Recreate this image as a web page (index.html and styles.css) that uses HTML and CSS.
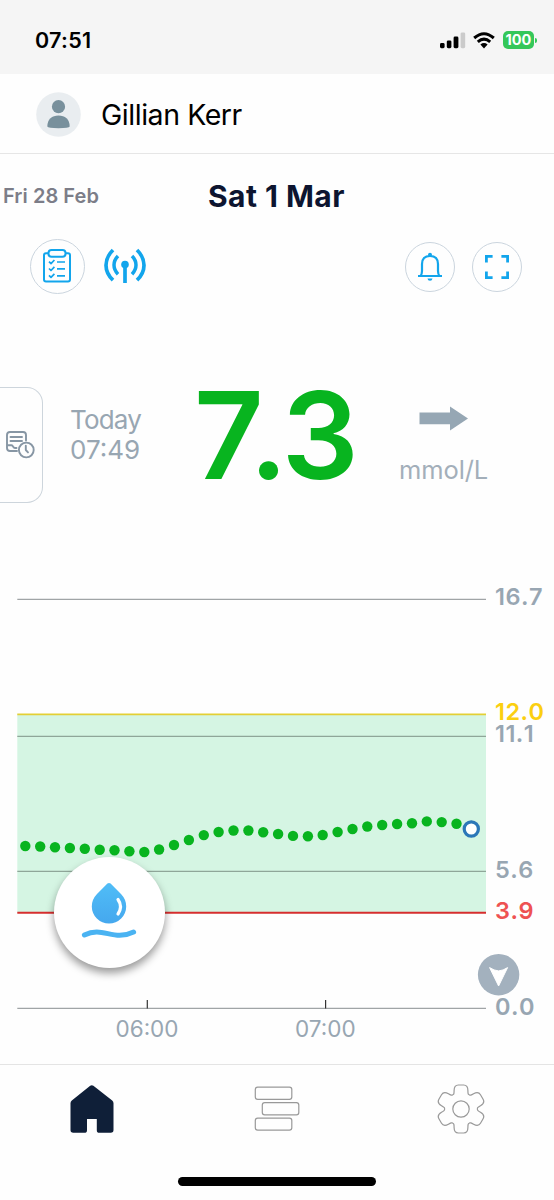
FILE: index.html
```
<!DOCTYPE html>
<html lang="en">
<head>
  <meta charset="UTF-8">
  <title>Glucose</title>
  <link rel="stylesheet" href="styles.css">
</head>
<body>

  <!-- Status bar -->
  <div class="statusbar">
    <span class="clock">07:51</span>
    <div class="status-icons">
      <svg width="26" height="17" viewBox="0 0 26 17">
        <rect x="0" y="11" width="4.6" height="5.2" rx="1.4"/>
        <rect x="6.8" y="8.4" width="4.6" height="7.8" rx="1.4"/>
        <rect x="13.6" y="4.6" width="4.8" height="11.6" rx="1.4"/>
        <rect x="20.6" y="0.4" width="4.6" height="15.8" rx="1.4" fill="#cbcbcb"/>
      </svg>
      <svg class="wifi" width="22" height="17" viewBox="0 0 22 17">
        <path d="M1.2 6 Q11 -2.6 20.8 6 M4.8 9.8 Q11 4.4 17.2 9.8" fill="none" stroke="#000" stroke-width="3"/>
        <path d="M7.4 12.4 Q11 9.8 14.6 12.4 L11 16.4 Z"/>
      </svg>
      <span class="battery">100</span>
      <span class="battery-tip"></span>
    </div>
  </div>

  <!-- Patient -->
  <div class="patient">
    <svg width="45" height="45" viewBox="0 0 45 45">
      <circle cx="22.5" cy="22.5" r="22.3" fill="#e9edf0"/>
      <circle cx="22.5" cy="14.7" r="6.6" fill="#78909c"/>
      <path d="M11.3 34.5 C11.3 27 16 23.4 22.5 23.4 S33.7 27 33.7 34.5 Q33 36.2 22.5 36.2 Q12 36.2 11.3 34.5 Z" fill="#78909c"/>
    </svg>
    <span class="patient-name">Gillian Kerr</span>
  </div>

  <!-- Dates -->
  <div class="dates">
    <span class="date-prev">Fri 28 Feb</span>
    <span class="date-current">Sat 1 Mar</span>
  </div>

  <!-- Actions -->
  <div class="actions">
    <div class="round round-big">
      <svg width="28" height="34" viewBox="0 0 28 34" fill="none" stroke="#12a5ec" stroke-width="2" stroke-linejoin="round">
        <path d="M5.5 4.2 H3 Q1 4.2 1 6.2 V30.6 Q1 32.6 3 32.6 H25 Q27 32.6 27 30.6 V6.2 Q27 4.2 25 4.2 H22.5"/>
        <rect x="5.5" y="1" width="17" height="6.8" rx="3"/>
        <path d="M6 12.6 l2 2 3.4-3.6 M6 19.5 l2 2 3.4-3.6 M6 26.4 l2 2 3.4-3.6 M14 13 h8 M14 19.9 h8 M14 26.8 h8" stroke-width="1.7"/>
      </svg>
    </div>
    <svg class="antenna" width="42" height="36" viewBox="0 0 42 36" fill="none" stroke="#12a5ec" stroke-width="3.7">
      <path d="M9 2 Q2 9 2 17.2 T9 32.2 M33 2 Q40 9 40 17.2 T33 32.2"/>
      <path d="M14 8 Q10 12 10 17 T14 26.2 M28 8 Q32 12 32 17 T28 26.2" stroke-width="3.5"/>
      <path d="M21 17 V35"/>
      <circle cx="21" cy="16.6" r="3.8" fill="#12a5ec" stroke="none"/>
    </svg>
    <div class="round bell">
      <svg width="26" height="30" viewBox="0 0 26 30" fill="none" stroke="#12a5ec" stroke-width="2.2">
        <path d="M1 24 H25 M3.4 24 Q5 22.5 5 19 V12 Q5 4 13 4 T21 12 V19 Q21 22.5 22.6 24"/>
        <circle cx="13" cy="2.8" r="2" fill="#12a5ec" stroke="none"/>
        <path d="M10.5 26.4 H15.5 Q15.2 28.8 13 28.8 T10.5 26.4 Z" fill="#12a5ec" stroke="none"/>
      </svg>
    </div>
    <div class="round">
      <svg width="24" height="24" viewBox="0 0 24 24" fill="none" stroke="#12a5ec" stroke-width="2.8">
        <path d="M1.4 7.6 V1.4 H7.6 M16.4 1.4 H22.6 V7.6 M22.6 16.4 V22.6 H16.4 M7.6 22.6 H1.4 V16.4"/>
      </svg>
    </div>
  </div>

  <!-- Current reading -->
  <div class="reading">
    <div class="drawer">
      <svg width="29" height="28" viewBox="0 0 29 28" fill="none" stroke="#8796a4" stroke-width="1.9" stroke-linecap="round" stroke-linejoin="round">
        <path d="M11 20 H4 Q1 20 1 17 V4 Q1 1 4 1 H17 Q20 1 20 4 V9.5 M4.5 6 H16 M4.5 10 H16 M1 14.2 H5.5 Q6.5 14.2 7 15.5 T9 17 H10.5"/>
        <circle cx="20.3" cy="19" r="7.4"/>
        <path d="M19.8 14.8 V19 L22 21.4"/>
      </svg>
    </div>
    <div class="when">
      <span class="day">Today</span>
      <span class="time">07:49</span>
    </div>
    <div class="value"><span class="whole">7</span>.3</div>
    <div class="trend">
      <svg width="50" height="25" viewBox="0 0 50 25">
        <path d="M0.5 6.5 H31 V0.5 L49 12.5 L31 24.5 V18.3 H0.5 Z" fill="#96a7b4"/>
      </svg>
      <span class="unit">mmol/L</span>
    </div>
  </div>

  <!-- Graph, x 0-554, y from 560 -->
  <div class="graph">
    <svg width="554" height="504" viewBox="0 560 554 504">
      <rect x="17.3" y="714" width="468.7" height="199" fill="#d5f5e3"/>
      <g stroke="#a0a4a6" stroke-width="1.2">
        <path d="M17.3 599.3 H486"/>
        <path d="M17.3 736.3 H486 M17.3 871.3 H486" stroke="#8fa699"/>
        <path d="M17.3 1008.4 H486"/>
        <path d="M147.3 1000 V1008.4 M325.6 1000 V1008.4" stroke="#333"/>
      </g>
      <path d="M17.3 714.3 H486" stroke="#e3cf35" stroke-width="1.8"/>
      <path d="M17.3 912.8 H486" stroke="#d62e2e" stroke-width="2"/>

      <g fill="#08b41f">
        <circle cx="25.3" cy="846" r="5.2"/>
        <circle cx="40.2" cy="846.5" r="5.2"/>
        <circle cx="55" cy="847.2" r="5.2"/>
        <circle cx="69.9" cy="848" r="5.2"/>
        <circle cx="84.8" cy="848.8" r="5.2"/>
        <circle cx="99.7" cy="849.7" r="5.2"/>
        <circle cx="114.5" cy="850.3" r="5.2"/>
        <circle cx="129.4" cy="851.3" r="5.2"/>
        <circle cx="144.3" cy="852" r="5.2"/>
        <circle cx="159.1" cy="849.5" r="5.2"/>
        <circle cx="174" cy="845" r="5.2"/>
        <circle cx="188.9" cy="840" r="5.2"/>
        <circle cx="203.8" cy="835.1" r="5.2"/>
        <circle cx="218.6" cy="832" r="5.2"/>
        <circle cx="233.5" cy="830.5" r="5.2"/>
        <circle cx="248.4" cy="830.5" r="5.2"/>
        <circle cx="263.2" cy="832.2" r="5.2"/>
        <circle cx="278.1" cy="834" r="5.2"/>
        <circle cx="293" cy="835.9" r="5.2"/>
        <circle cx="307.9" cy="836.3" r="5.2"/>
        <circle cx="322.7" cy="835" r="5.2"/>
        <circle cx="337.6" cy="832" r="5.2"/>
        <circle cx="352.5" cy="829" r="5.2"/>
        <circle cx="367.3" cy="826.5" r="5.2"/>
        <circle cx="382.2" cy="825" r="5.2"/>
        <circle cx="397.1" cy="824" r="5.2"/>
        <circle cx="412" cy="823.2" r="5.2"/>
        <circle cx="426.8" cy="821.4" r="5.2"/>
        <circle cx="441.7" cy="822.1" r="5.2"/>
        <circle cx="456.5" cy="823.8" r="5.2"/>
      </g>
      <circle cx="471.3" cy="829" r="7.1" fill="#fff" stroke="#2b77b8" stroke-width="3.2"/>

      <circle cx="498.6" cy="974.7" r="20.7" fill="#a3b1be"/>
      <path d="M489.6 967.6 Q494 970.6 498.6 970.9 Q503.2 970.6 507.6 967.6 L498.6 986 Z" fill="#fff" stroke="#fff" stroke-width="1" stroke-linejoin="round"/>

      <g class="level">
        <text x="495" y="604.9">16.7</text>
        <text x="495" y="720.3" class="high">12.0</text>
        <text x="495" y="742.3">11.1</text>
        <text x="495" y="877.5">5.6</text>
        <text x="495" y="918.8" class="low">3.9</text>
        <text x="495" y="1014.6">0.0</text>
      </g>
      <g class="hour">
        <text x="147" y="1037.3">06:00</text>
        <text x="325.4" y="1037.3">07:00</text>
      </g>
    </svg>
    <div class="drop-btn">
      <svg width="56" height="58" viewBox="0 0 56 58">
        <defs>
          <linearGradient id="water" x1="0" y1="0" x2="0" y2="1">
            <stop offset="0" stop-color="#50bdf7"/>
            <stop offset="1" stop-color="#45a8ee"/>
          </linearGradient>
        </defs>
        <path d="M26.4 1.6 Q28 0.2 29.6 1.6 L40 12 Q45.2 17.4 45.2 24.4 A17.2 17.2 0 0 1 10.8 24.4 Q10.8 17.4 16 12 Z" fill="url(#water)"/>
        <path d="M37 17.5 Q42 24.5 37 32" fill="none" stroke="#fff" stroke-width="3.2" stroke-linecap="round"/>
        <path d="M3.4 53 C22 43.5 32 60 52.6 50" fill="none" stroke="#4ab3f2" stroke-width="5" stroke-linecap="round"/>
      </svg>
    </div>
  </div>

  <!-- Bottom navigation -->
  <div class="nav">
    <svg width="44" height="48" viewBox="0 0 44 48">
      <path d="M20.2 0.8 Q21.8 -0.4 23.4 0.8 L42.2 15.4 Q43.5 16.5 43.5 18.2 V45 Q43.5 47.8 40.8 47.8 H29.4 Q26.8 47.8 26.8 45.2 V34 H17 V45.2 Q17 47.8 14.4 47.8 H3.2 Q0.5 47.8 0.5 45 V18.2 Q0.5 16.5 1.8 15.4 Z" fill="#0f1f38"/>
    </svg>
    <svg class="nav-list" width="46" height="46" viewBox="0 0 46 46" fill="none" stroke="#999" stroke-width="1.2">
      <rect x="1.3" y="1.2" width="36.5" height="12.1" rx="2.4"/>
      <rect x="8.3" y="16.7" width="36.5" height="12.1" rx="2.4"/>
      <rect x="1.3" y="32.1" width="36.5" height="12.1" rx="2.4"/>
    </svg>
    <svg width="50" height="50" viewBox="-25 -25 50 50" fill="none" stroke="#999" stroke-width="1.2">
      <defs>
        <path id="tooth" d="M-8.4 -14.5 C-7 -13.9 -6.9 -16.4 -6.9 -18.5 C-6.9 -22.4 -5.4 -24 -2.6 -24 H2.6 C5.4 -24 6.9 -22.4 6.9 -18.5 C6.9 -16.4 7 -13.9 8.4 -14.5"/>
      </defs>
      <circle cx="0" cy="0" r="8.2"/>
      <use href="#tooth"/>
      <use href="#tooth" transform="rotate(60)"/>
      <use href="#tooth" transform="rotate(120)"/>
      <use href="#tooth" transform="rotate(180)"/>
      <use href="#tooth" transform="rotate(240)"/>
      <use href="#tooth" transform="rotate(300)"/>
    </svg>
  </div>
  <div class="home-bar"></div>

</body>
</html>
```
FILE: styles.css
```
* {
  box-sizing: border-box;
}

body {
  margin: 0;
  width: 554px;
  height: 1200px;
  overflow: hidden;
  display: flex;
  flex-direction: column;
  background: #fefefe;
  font-family: Inter, "Liberation Sans", sans-serif;
  white-space: nowrap;
}

svg {
  display: block;
  flex: none;
}

/* Status bar */
.statusbar {
  height: 74px;
  padding: 6px 17px 0 35px;
  display: flex;
  align-items: center;
  justify-content: space-between;
  background: #f5f5f5;
}

.clock {
  font-size: 21.5px;
  font-weight: 600;
  letter-spacing: 0.3px;
}

.status-icons {
  display: flex;
  align-items: center;
}

.wifi {
  margin: 0 8px 0 7px;
}

.battery {
  width: 31px;
  height: 18px;
  border-radius: 5px;
  background: #34c759;
  color: #fff;
  font-size: 14.5px;
  font-weight: 700;
  line-height: 18px;
  text-align: center;
}

.battery-tip {
  width: 2px;
  height: 5px;
  margin-left: 1px;
  border-radius: 0 2px 2px 0;
  background: #34c759;
}

/* Patient */
.patient {
  height: 80px;
  padding: 2px 36px 0;
  display: flex;
  align-items: center;
  gap: 20px;
  border-bottom: 1.5px solid #e6e6e6;
}

.patient-name {
  font-size: 28.5px;
  letter-spacing: -0.45px;
}

/* Dates */
.dates {
  height: 84px;
  padding-left: 3px;
  display: flex;
  align-items: center;
}

.date-prev {
  width: 205px;
  color: #7c7d88;
  font-size: 20px;
  font-weight: 600;
  letter-spacing: 0.05px;
}

.date-current {
  color: #0d1530;
  font-size: 30px;
  font-weight: 700;
  letter-spacing: 0.45px;
}

/* Actions */
.actions {
  height: 56px;
  padding: 0 32px 0 30px;
  display: flex;
  align-items: center;
}

.round {
  width: 50px;
  height: 50px;
  margin-top: 1px;
  border: 1.5px solid #cbd5de;
  border-radius: 50%;
  display: flex;
  align-items: center;
  justify-content: center;
}

.round-big {
  width: 55px;
  height: 55px;
  margin-top: 0;
}

.round-big svg {
  margin-right: 1px;
}

.antenna {
  margin-left: 19px;
}

.bell {
  margin-left: auto;
  margin-right: 17px;
}

/* Current reading */
.reading {
  height: 266px;
  padding-top: 93px;
  display: flex;
  align-items: flex-start;
}

.drawer {
  width: 43px;
  height: 116px;
  border: 1.5px solid #cdd5dc;
  border-left: none;
  border-radius: 0 16px 16px 0;
  display: flex;
  align-items: center;
  padding-left: 6px;
}

.when {
  width: 151px;
  padding: 18px 0 0 27px;
  display: flex;
  flex-direction: column;
  color: #98a6b2;
  font-size: 26px;
  line-height: 30px;
}

.day {
  letter-spacing: -0.8px;
}

.value {
  width: 205px;
  color: #08b41f;
  font-size: 121px;
  font-weight: 600;
  line-height: 97px;
  letter-spacing: -3px;
}

.whole {
  letter-spacing: -14.5px;
}

.trend {
  padding-top: 19px;
  display: flex;
  flex-direction: column;
}

.trend svg {
  margin-left: 20px;
}

.unit {
  margin-top: 22px;
  color: #a3afba;
  font-size: 25.5px;
  line-height: 34px;
  letter-spacing: -0.1px;
}

/* Graph */
.graph {
  position: relative;
  height: 504px;
}

.level {
  fill: #98a6b2;
  font-size: 23.5px;
  font-weight: 600;
  font-kerning: none;
  letter-spacing: 0.5px;
}

.high {
  fill: #fbcf10;
}

.low {
  fill: #ee5252;
}

.hour {
  fill: #98a6b2;
  font-size: 22.5px;
  text-anchor: middle;
}

.drop-btn {
  position: absolute;
  left: 54px;
  top: 297px;
  width: 111px;
  height: 111px;
  padding: 0 2px 3px 0;
  border-radius: 50%;
  background: #fff;
  box-shadow: 0 5px 8px rgba(0, 0, 0, 0.4);
  display: flex;
  align-items: center;
  justify-content: center;
}

/* Bottom navigation */
.nav {
  height: 113px;
  padding: 0 68px 24px 70px;
  display: flex;
  align-items: center;
  justify-content: space-between;
  border-top: 1.5px solid #e4e4e4;
}

.nav-list {
  margin-left: 4px;
}

.home-bar {
  width: 198px;
  height: 9px;
  margin: 0 auto;
  border-radius: 5px;
  background: #000;
}
```
